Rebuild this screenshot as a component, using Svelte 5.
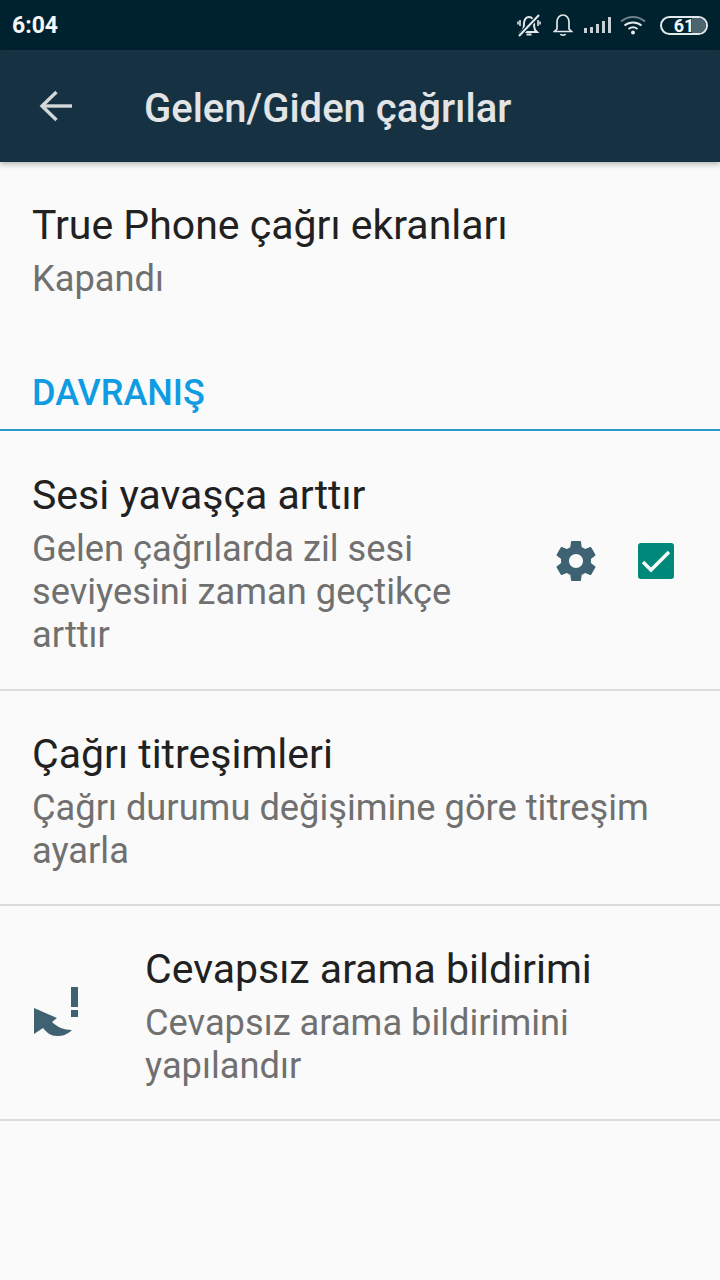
<script>
    const rows = [
        { title: "Sesi yavaşça arttır", lines: ["Gelen çağrılarda zil sesi", "seviyesini zaman geçtikçe", "arttır"], controls: true, tall: true },
        { title: "Çağrı titreşimleri", lines: ["Çağrı durumu değişimine göre titreşim", "ayarla"] },
        { title: "Cevapsız arama bildirimi", lines: ["Cevapsız arama bildirimini", "yapılandır"], icon: true }
    ];
</script>

<div class="screen">
    <div class="status">
        <span class="time">6:04</span>
        <div class="status-icons">
            <svg width="26" height="26" viewBox="0 0 26 26" fill="none" stroke="#e3e8ea" stroke-width="2">
                <path d="M7 18c1-2 1-4 1-7 0-3 2-6 5-6s5 3 5 6c0 3 0 5 1 7l2 2H5z" />
                <path d="M10.500 22.500h5" />
                <path d="M4 8v6M2 9.500v3M22 8v6M24 9.500v3" stroke-width="1.600" />
                <path d="M3 24 23 3" stroke="#00222f" stroke-width="4.500" />
                <path d="M3 24 23 3" />
            </svg>
            <svg class="bell" width="20" height="24" viewBox="0 0 20 24" fill="none" stroke="#e3e8ea" stroke-width="1.700">
                <path d="M4 16V9c0-4 2.500-7 6-7s6 3 6 7v7l2.500 2.500h-17z" />
                <path d="M7.500 21c.5 1.500 4.500 1.500 5 0" />
            </svg>
            <div class="signal">
                <i style="height: 5px"></i>
                <i style="height: 6px"></i>
                <i style="height: 9px"></i>
                <i style="height: 12px"></i>
                <i style="height: 16px"></i>
            </div>
            <svg class="wifi" width="26" height="20" viewBox="0 0 26 20" fill="none">
                <path d="M1 6.500c7-6 17-6 24 0" stroke="#6f8188" stroke-width="2" />
                <path d="M4.500 10.500c5-4 12-4 17 0" stroke="#e3e8ea" stroke-width="2" />
                <path d="M8.500 14c3-2.300 6-2.300 9 0" stroke="#e3e8ea" stroke-width="2" />
                <circle cx="13" cy="17.500" r="2" fill="#e3e8ea" />
            </svg>
            <div class="battery">
                <span>61</span>
            </div>
        </div>
    </div>

    <header class="toolbar">
        <svg class="back" width="34" height="32" viewBox="0 0 34 32" fill="none" stroke="#d3d7d9" stroke-width="3.400">
            <path d="M33 16H3" />
            <path d="M17.500 2 3 16l14.500 14" />
        </svg>
        <h1>Gelen/Giden çağrılar</h1>
    </header>

    <div class="first-row">
        <div class="title">True Phone çağrı ekranları</div>
        <div class="sub">Kapandı</div>
    </div>

    <div class="section-head">DAVRANIŞ</div>

    {#each rows as row}
        <div class="row" class:tall={row.tall}>
            {#if row.icon}
                <svg class="missed" width="46" height="52" viewBox="0 0 46 52" fill="#3f6273">
                    <rect x="37" y="0" width="7" height="20" />
                    <rect x="37" y="23" width="7" height="7" />
                    <path d="M0 21 23 31 18 35C23 40 30 43 38 43 33 48 28 49 23 49 17 49 13 46 9 41L0 47z" />
                </svg>
            {/if}
            <div class="text">
                <div class="title">{row.title}</div>
                {#each row.lines as line}
                    <div class="sub">{line}</div>
                {/each}
            </div>
            {#if row.controls}
                <div class="controls">
                    <svg width="48" height="48" viewBox="0 0 24 24" fill="#3f6273">
                        <path d="M19.430 12.980c.04-.32.070-.64.070-.98s-.03-.66-.07-.98l2.110-1.650c.19-.15.240-.42.120-.64l-2-3.460c-.12-.22-.39-.3-.61-.22l-2.490 1c-.52-.4-1.080-.73-1.690-.98l-.38-2.650C14.460 2.180 14.250 2 14 2h-4c-.25 0-.46.180-.49.420l-.38 2.650c-.61.250-1.170.590-1.690.980l-2.490-1c-.23-.09-.49 0-.61.220l-2 3.460c-.13.220-.07.490.12.640l2.110 1.650c-.04.320-.07.650-.07.980s.03.660.07.980l-2.110 1.650c-.19.150-.24.420-.12.640l2 3.460c.12.220.39.300.61.220l2.490-1c.52.400 1.080.730 1.690.980l.38 2.650c.03.240.24.420.49.420h4c.25 0 .46-.18.490-.42l.38-2.650c.61-.25 1.170-.59 1.690-.98l2.490 1c.23.090.49 0 .61-.22l2-3.460c.12-.22.070-.49-.12-.64l-2.110-1.650zM12 15.500c-1.930 0-3.500-1.570-3.500-3.500s1.570-3.500 3.500-3.500 3.500 1.570 3.500 3.500-1.570 3.500-3.500 3.500z" />
                    </svg>
                    <div class="check">
                        <svg width="36" height="36" viewBox="0 0 36 36" fill="none" stroke="#fafafa" stroke-width="3.400">
                            <path d="M5 19l8 8L31 9" />
                        </svg>
                    </div>
                </div>
            {/if}
        </div>
    {/each}
</div>

<style>
    :global(body) {
        margin: 0;
        background: #fafafa;
    }

    .screen {
        width: 720px;
        height: 1280px;
        overflow: hidden;
        background: #fafafa;
        font-family: Roboto, sans-serif;
    }

    .status {
        height: 50px;
        background: #00222f;
        display: flex;
        align-items: center;
        justify-content: space-between;
        padding: 0 12px;
        box-sizing: border-box;
    }

    .time {
        color: #f4f6f7;
        font-size: 23px;
        font-weight: 700;
    }

    .status-icons {
        display: flex;
        align-items: center;
        gap: 11px;
    }

    .signal {
        display: flex;
        align-items: flex-end;
        gap: 3px;
        height: 18px;
        margin-bottom: 2px;
    }

    .signal i {
        width: 3px;
        background: #c9d0d3;
    }

    .wifi {
        margin: 0 3px 0 -2px;
    }

    .battery {
        position: relative;
        width: 44px;
        height: 15px;
        border: 2px solid #e3e8ea;
        border-radius: 10px;
        overflow: hidden;
        display: flex;
        align-items: center;
        justify-content: center;
    }

    .battery::after {
        content: "";
        position: absolute;
        right: 0;
        top: 0;
        bottom: 0;
        width: 32%;
        background: #4c6470;
    }

    .battery span {
        position: relative;
        z-index: 1;
        color: #f4f6f7;
        font-size: 18px;
        font-weight: 700;
        line-height: 15px;
    }

    .toolbar {
        height: 112px;
        background: #163242;
        display: flex;
        align-items: center;
        padding-left: 39px;
        box-sizing: border-box;
        box-shadow: 0 2px 6px rgba(0, 0, 0, 0.3);
        position: relative;
    }

    .back {
        flex: none;
    }

    h1 {
        margin: 4px 0 0 71px;
        color: #e2e4e5;
        font-size: 40px;
        font-weight: 500;
    }

    .first-row {
        padding: 39px 32px 0;
        height: 163px;
        box-sizing: border-box;
    }

    .section-head {
        height: 106px;
        box-sizing: border-box;
        padding: 48px 32px 0;
        color: #0f9ce2;
        font-size: 36px;
        font-weight: 500;
        line-height: 40px;
        border-bottom: 2px solid #2a9ac9;
    }

    .row {
        display: flex;
        align-items: center;
        padding: 0 33px 0 32px;
        box-sizing: border-box;
        border-bottom: 2px solid #dcdcdc;
        height: 215px;
    }

    .row.tall {
        height: 260px;
    }

    .text {
        flex: 1;
        padding-top: 6px;
    }

    .title {
        color: #212121;
        font-size: 41px;
        line-height: 48px;
    }

    .sub {
        color: #707070;
        font-size: 36.25px;
        line-height: 43px;
    }

    .first-row .sub {
        margin-top: 8px;
    }

    .text .title {
        margin-bottom: 8px;
    }

    .missed {
        flex: none;
        margin: 0 65px 0 2px;
    }

    .controls {
        display: flex;
        align-items: center;
        gap: 38px;
        margin: 1px 13px 0 0;
    }

    .check {
        width: 36px;
        height: 36px;
        border-radius: 3px;
        background: #00897b;
    }

    .check svg {
        display: block;
    }
</style>
